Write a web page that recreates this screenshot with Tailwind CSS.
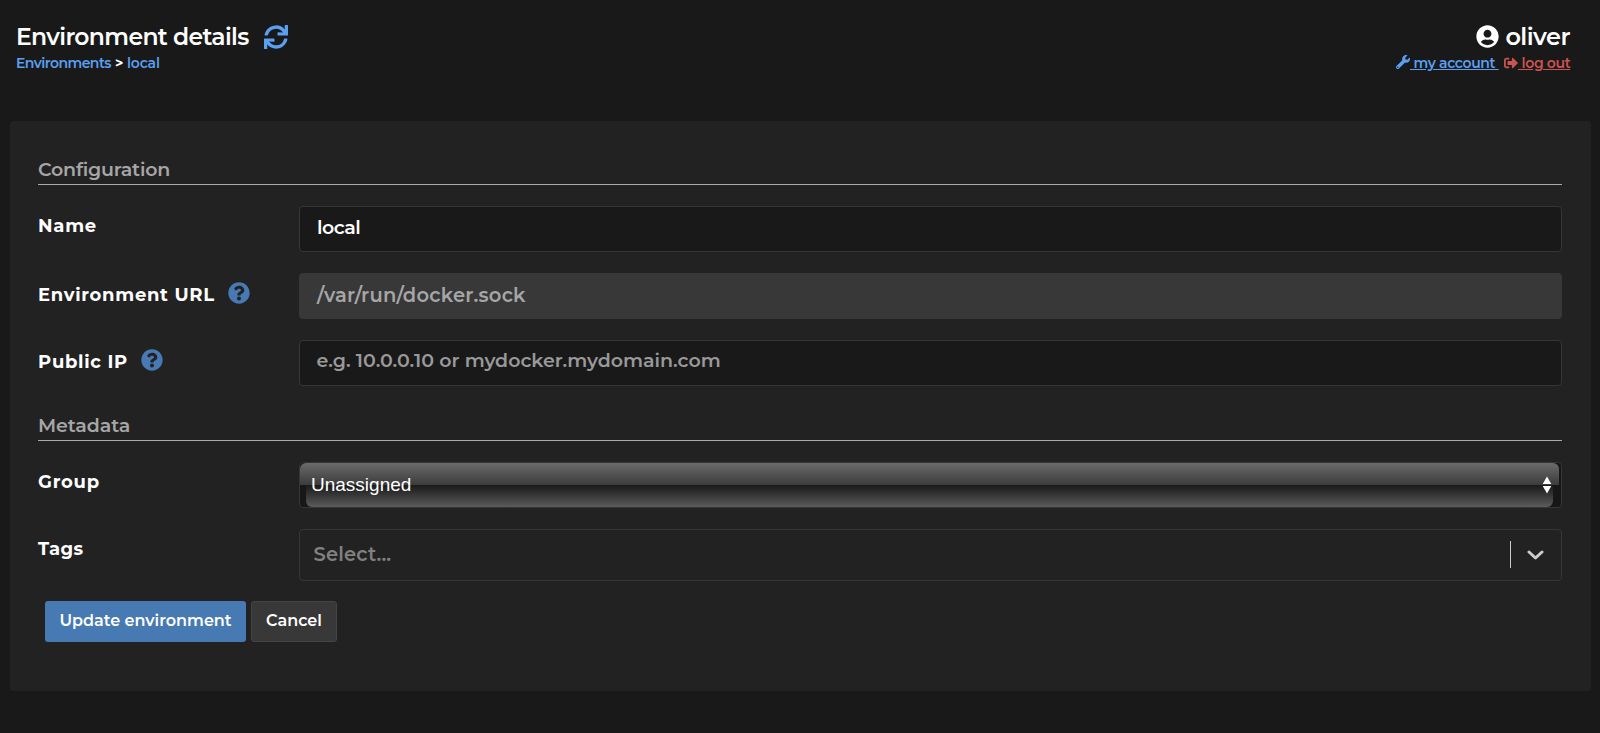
<!DOCTYPE html>
<html lang="en">
<head>
<meta charset="utf-8">
<title>Environment details</title>
<script src="https://cdn.jsdelivr.net/npm/@tailwindcss/browser@4"></script>
</head>
<body class="h-[733px] overflow-hidden bg-[#191919] font-['Montserrat','Inter',sans-serif] font-semibold whitespace-nowrap text-white">
<header class="flex h-[121px] justify-between pt-[22px] pr-[30px] pl-4">
  <div>
    <div class="flex h-[30px] items-center">
      <h1 class="w-[233px] text-[23.5px] leading-[30px] tracking-[-0.65px]">Environment details</h1>
      <svg class="mb-px ml-[14.5px] size-6" viewBox="0 0 512 512" fill="#5a9ff0"><path d="M440.65 12.57l4 82.77A247.16 247.16 0 0 0 255.83 8C134.73 8 33.91 94.92 12.29 209.82A12 12 0 0 0 24.09 224h49.05a12 12 0 0 0 11.67-9.26 175.91 175.91 0 0 1 317-56.94l-101.46-4.86a12 12 0 0 0-12.57 12v47.41a12 12 0 0 0 12 12H500a12 12 0 0 0 12-12V12a12 12 0 0 0-12-12h-47.37a12 12 0 0 0-11.98 12.57zM255.83 432a175.61 175.61 0 0 1-146-77.8l101.8 4.87a12 12 0 0 0 12.57-12v-47.4a12 12 0 0 0-12-12H12a12 12 0 0 0-12 12V500a12 12 0 0 0 12 12h47.35a12 12 0 0 0 12-12.6l-4.15-82.57A247.17 247.17 0 0 0 255.83 504c121.11 0 221.93-86.92 243.55-201.82a12 12 0 0 0-11.8-14.18h-49.05a12 12 0 0 0-11.67 9.26A175.86 175.86 0 0 1 255.83 432z"/></svg>
    </div>
    <nav class="flex h-[22px] items-center text-sm tracking-[-0.55px] text-[#5a9ff0]"><a class="w-24">Environments</a><span class="w-[15px] pl-[3px] font-bold text-white">&gt;</span><a class="tracking-[-0.2px]">local</a></nav>
  </div>
  <div>
    <div class="flex h-[30px] items-center justify-end text-2xl leading-[30px]">
      <svg class="mr-1.5 mb-0.5 size-[23px]" viewBox="0 0 496 512" fill="#fff"><path d="M248 8C111 8 0 119 0 256s111 248 248 248 248-111 248-248S385 8 248 8zm0 96c48.6 0 88 39.4 88 88s-39.400 88-88 88-88-39.400-88-88 39.400-88 88-88zm0 344c-58.700 0-111.300-26.600-146.500-68.200 18.800-35.400 55.600-59.800 98.500-59.800 2.400 0 4.800.4 7.100 1.100 13 4.200 26.600 6.900 40.900 6.900 14.300 0 28-2.700 40.900-6.900 2.300-.7 4.700-1.100 7.100-1.100 42.900 0 79.700 24.400 98.500 59.800C359.300 421.400 306.700 448 248 448z"/></svg>
      <span class="tracking-[-0.55px]">oliver</span>
    </div>
    <div class="flex h-[22px] items-center justify-end text-sm">
      <svg class="mb-0.5 size-[14px]" viewBox="0 0 512 512" fill="#5a9ff0"><path d="M507.730 109.100c-2.240-9.030-13.540-12.090-20.120-5.510l-74.360 74.360-67.880-11.310-11.310-67.880 74.360-74.360c6.620-6.620 3.430-17.900-5.660-20.160-47.380-11.740-99.550.91-136.580 37.930-39.640 39.640-50.550 97.100-34.050 147.200L18.740 402.760c-24.990 24.990-24.990 65.510 0 90.500 24.990 24.990 65.510 24.990 90.500 0l213.210-213.210c50.120 16.710 107.470 5.680 147.370-34.220 37.070-37.070 49.700-89.320 37.910-136.730zM64 472c-13.250 0-24-10.750-24-24 0-13.260 10.750-24 24-24s24 10.740 24 24c0 13.250-10.750 24-24 24z"/></svg>
      <a class="w-[88px] whitespace-pre tracking-[-0.35px] text-[#5a9ff0] underline"> my account </a>
      <svg class="ml-1.5 h-[14px] w-[14px]" viewBox="0 0 512 512" fill="#cb5450"><path d="M497 273L329 441c-15 15-41 4.500-41-17v-96H152c-13.300 0-24-10.700-24-24v-96c0-13.300 10.700-24 24-24h136V88c0-21.400 25.900-32 41-17l168 168c9.300 9.400 9.300 24.600 0 34zM192 436v-40c0-6.600-5.400-12-12-12H96c-17.700 0-32-14.300-32-32V160c0-17.700 14.300-32 32-32h84c6.600 0 12-5.400 12-12V76c0-6.600-5.400-12-12-12H96c-53 0-96 43-96 96v192c0 53 43 96 96 96h84c6.600 0 12-5.400 12-12z"/></svg>
      <a class="w-[52px] whitespace-pre tracking-[-0.35px] text-[#cb5450] underline"> log out</a>
    </div>
  </div>
</header>

<main class="mx-[9.5px] h-[570px] rounded bg-[#222] px-[28.500px] pt-[35px] text-[19px] leading-7">
  <h2 class="mb-[21px] h-[29px] border-b border-[#aaa] tracking-[-0.2px] text-[#a6a6a6]">Configuration</h2>

  <div class="mb-[21px] flex">
    <div class="w-[261px] pt-[6px] text-lg leading-7 font-bold tracking-[0.75px]">Name</div>
    <div class="h-[46px] flex-1 rounded border border-[#363636] bg-[#191919] px-[17px] pt-[7px] tracking-[-0.5px]">local</div>
  </div>
  <div class="mb-[21px] flex">
    <div class="flex w-[261px] pt-[8px] text-lg leading-7 font-bold tracking-[0.7px]">Environment URL
      <svg class="ml-[13px] mt-px size-[22px]" viewBox="0 0 512 512" fill="#4779b3"><path d="M504 256c0 136.997-111.043 248-248 248S8 392.997 8 256C8 119.083 119.043 8 256 8s248 111.083 248 248zM262.655 90c-54.497 0-89.255 22.957-116.549 63.758-3.536 5.286-2.353 12.415 2.715 16.258l34.699 26.310c5.205 3.947 12.621 3.008 16.665-2.122 17.864-22.658 30.113-35.797 57.303-35.797 20.429 0 45.698 13.148 45.698 32.958 0 14.976-12.363 22.667-32.534 33.976C247.128 238.528 216 254.941 216 296v4c0 6.627 5.373 12 12 12h56c6.627 0 12-5.373 12-12v-1.333c0-28.462 83.186-29.647 83.186-106.667 0-58.002-60.165-102-116.531-102zM256 338c-25.365 0-46 20.635-46 46 0 25.364 20.635 46 46 46s46-20.636 46-46c0-25.365-20.635-46-46-46z"/></svg>
    </div>
    <div class="h-[46px] flex-1 rounded bg-[#383838] px-[18px] pt-2 text-[19.5px] tracking-[0.25px] text-[#a6a6a6]">/var/run/docker.sock</div>
  </div>
  <div class="mb-[21px] flex">
    <div class="flex w-[261px] pt-[8px] text-lg leading-7 font-bold tracking-[0.7px]">Public IP
      <svg class="ml-[13px] mt-px size-[22px]" viewBox="0 0 512 512" fill="#4779b3"><path d="M504 256c0 136.997-111.043 248-248 248S8 392.997 8 256C8 119.083 119.043 8 256 8s248 111.083 248 248zM262.655 90c-54.497 0-89.255 22.957-116.549 63.758-3.536 5.286-2.353 12.415 2.715 16.258l34.699 26.310c5.205 3.947 12.621 3.008 16.665-2.122 17.864-22.658 30.113-35.797 57.303-35.797 20.429 0 45.698 13.148 45.698 32.958 0 14.976-12.363 22.667-32.534 33.976C247.128 238.528 216 254.941 216 296v4c0 6.627 5.373 12 12 12h56c6.627 0 12-5.373 12-12v-1.333c0-28.462 83.186-29.647 83.186-106.667 0-58.002-60.165-102-116.531-102zM256 338c-25.365 0-46 20.635-46 46 0 25.364 20.635 46 46 46s46-20.636 46-46c0-25.365-20.635-46-46-46z"/></svg>
    </div>
    <div class="h-[46px] flex-1 rounded border border-[#363636] bg-[#191919] px-[16.5px] pt-1.5 text-[#999]">e.g. 10.0.0.10 or mydocker.mydomain.com</div>
  </div>

  <h2 class="mb-[21px] mt-[26px] h-[29px] border-b border-[#aaa] tracking-[-0.1px] text-[#a6a6a6]">Metadata</h2>

  <div class="mb-[21px] flex">
    <div class="w-[261px] pt-[6px] text-lg leading-7 font-bold tracking-[0.75px]">Group</div>
    <div class="relative h-[46px] flex-1 overflow-hidden rounded border border-[#363636] bg-[#171717]">
      <div class="mr-0.5 h-[22px] rounded-t-md bg-linear-to-b from-[#6b6b6b] to-[#3c3c3c]"></div>
      <div class="mr-2 ml-[6px] h-[22px] rounded-b-md bg-linear-to-b from-[#1a1a1a] to-[#5c5c5c]"></div>
      <div class="absolute inset-0 flex items-center justify-between pr-[9px] pl-[11px] font-['Liberation_Sans'] font-normal">Unassigned
        <svg class="h-[18px] w-[10px]" viewBox="0 0 10 18" fill="#fff"><path d="M5 0.500L9.300 8H.7zM5 17.500L.7 10h8.600z"/></svg>
      </div>
    </div>
  </div>
  <div class="mb-[20px] flex">
    <div class="w-[261px] pt-[6px] text-lg leading-7 font-bold tracking-[0.4px]">Tags</div>
    <div class="flex h-[52px] flex-1 items-center rounded border border-[#363636] pr-[17px] pl-[13.5px] text-[19.5px] tracking-[0.15px] text-[#808080]"><span class="-mt-0.5 flex-1">Select...</span>
      <span class="mr-4 mb-0.5 h-[27px] w-px bg-[#ccc]"></span>
      <svg class="h-[10px] w-[17px]" viewBox="0 0 17 10" fill="none" stroke="#ccc" stroke-width="3" stroke-linecap="round" stroke-linejoin="round"><path d="M2 2l6.500 6L15 2"/></svg>
    </div>
  </div>
  <div class="flex gap-[5px] pl-[7px] text-base">
    <button class="h-[41px] w-[201px] rounded-[3px] bg-[#4779b3] pb-px">Update environment</button>
    <button class="h-[41px] w-[86px] rounded-[3px] border border-[#444] bg-[#383838] pb-px">Cancel</button>
  </div>
</main>
</body>
</html>
